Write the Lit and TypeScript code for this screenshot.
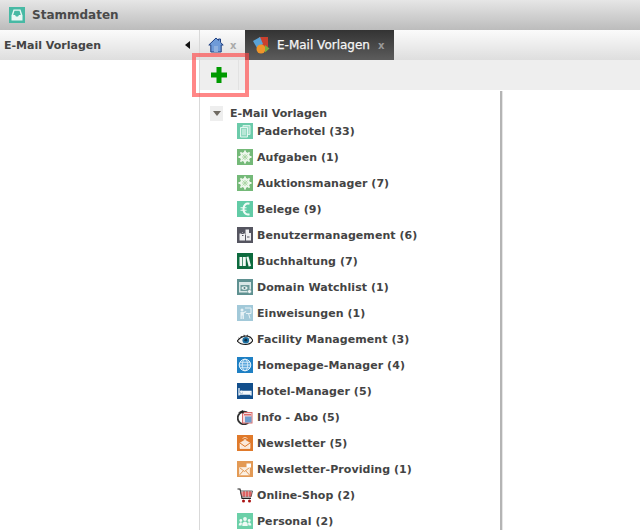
import { LitElement, html, css, svg } from "lit";
import { customElement } from "lit/decorators.js";

const box = (bg: string, inner: unknown) => svg`<rect width="16" height="16" fill="${bg}"/>${inner}`;
const gear = svg`<g stroke="#f1f8ef" stroke-width="1.800"><path d="M8 1.500V14.500M1.500 8H14.500M3.400 3.400L12.600 12.600M12.600 3.400L3.400 12.600"/></g><circle cx="8" cy="8" r="5" fill="#eef7ec"/><path d="M5.500 5.500l5 5M10.500 5.500l-5 5M8 5v6M5 8h6" stroke="#a8d4a2" stroke-width=".9"/>`;
const icons: Record<string, unknown> = {
  paper: box("#6ccbaa", svg`<path d="M6 2.500h7v9H6z" fill="#a5e0cb" stroke="#d7f3e9"/><path d="M3.500 4.500h7v9.500h-7z" fill="#8ed8be" stroke="#e2f7ef"/><path d="M5 7h4M5 9h4M5 11h4" stroke="#e2f7ef"/>`),
  gear: box("#74b978", gear),
  euro: box("#62cba6", svg`<path d="M12.500 2.800C8.500 1.800 6.500 4.500 6.500 8s2 6.200 6 5.200" fill="none" stroke="#f1fbf7" stroke-width="2"/><path d="M3.500 6.800h6M3.500 9.200h6" stroke="#f1fbf7" stroke-width="1.100"/>`),
  users: box("#555560", svg`<path d="M2.500 6.500h5.500v7H2.500zM8.500 2.500h3.500v3.500h2v7.500H9V8H8.500z" fill="#eeeef0"/><path d="M4.500 5h2v1.500h-2zM5 8.500h1.500M10 10h2.500" stroke="#555560" fill="#eeeef0"/>`),
  books: box("#0d6b3e", svg`<path d="M2.500 4h2.800v9H2.500zM6 4h2.800v9H6z" fill="#f2faf6"/><path d="M9.300 4l2.200-.5 2.500 9.500-2.400.5z" fill="#f2faf6"/>`),
  domain: box("#5f9191", svg`<rect x="2" y="3" width="12" height="10.500" fill="#d9e7e7"/><rect x="3.500" y="6" width="9" height="6" fill="#6f9c9c"/><ellipse cx="7.500" cy="9" rx="3" ry="1.800" fill="#e8f1f1"/><circle cx="7.500" cy="9" r="1" fill="#4f7d7d"/><circle cx="12.500" cy="12.500" r="2" fill="#f0f5f5" stroke="#5f9191" stroke-width=".6"/>`),
  teach: box("#a2c9d9", svg`<circle cx="5" cy="5" r="1.500" fill="#e7f2f6"/><path d="M3.500 7h3l2.500-1 .4 1-2.500 1.300v5.700H5.500v-3.500H4.800v3.500H3.500z" fill="#e7f2f6"/><path d="M8 3h6v5.500H9" fill="none" stroke="#e7f2f6"/><path d="M11.500 8.500l1.500 5" stroke="#e7f2f6"/>`),
  eye: svg`<path d="M.3 10C3 6.500 6 5 9 5s5.500 1.500 6.800 4.500C14 12.500 11.500 13.500 8.500 13.500S2.500 12.500.3 10z" fill="#f4f4f4" stroke="#151515" stroke-width="1.100"/><circle cx="8.800" cy="9.200" r="3.300" fill="#1a6ea0"/><circle cx="8.800" cy="9.200" r="1.400" fill="#0c2c44"/><path d="M1.500 7l1.500 1M4 5l1 2M7 3.800l.5 1.700M10.500 3.800l-.5 1.700M14 6l-1.500 1" stroke="#222" stroke-width=".9"/>`,
  globe: box("#1f80c4", svg`<circle cx="8" cy="8" r="5.800" fill="#5ea8dc" stroke="#e3f1fb"/><ellipse cx="8" cy="8" rx="2.700" ry="5.800" fill="none" stroke="#e3f1fb" stroke-width=".8"/><path d="M2.200 8h11.600M3 5.300h10M3 10.700h10" stroke="#e3f1fb" stroke-width=".8"/>`),
  bed: box("#134f8c", svg`<path d="M2 5v7.500M2 11h12v1.500M14 11V8.500H6.500V11" fill="none" stroke="#f2f6fa" stroke-width="1.300"/><rect x="3" y="7.500" width="3" height="2.500" rx="1" fill="#f2f6fa"/><rect x="6.500" y="8" width="7" height="3" fill="#f2f6fa"/>`),
  info: svg`<circle cx="7" cy="9" r="6.300" fill="#fff" stroke="#333" stroke-width="1.800"/><rect x="5.500" y="3.500" width="9.500" height="10.500" fill="#f3d9dc" stroke="#d86a6a"/><rect x="8" y="7.500" width="6.500" height="6" fill="#6f9ccc"/><path d="M1 3.500L6 1 7 4.500z" fill="#222"/><path d="M7 5.800h7" stroke="#d23a3a"/>`,
  mail: box("#e07a2b", svg`<path d="M3 8L8 5.200 13 8v5.500H3z" fill="#fbe8d8" stroke="#fff" stroke-width=".6"/><path d="M3 8l5 3.500L13 8" fill="none" stroke="#e07a2b"/><path d="M5.500 3.500a3.500 3.500 0 015 0M6.700 5a2 2 0 012.600 0" fill="none" stroke="#fbe3cf" stroke-width=".8"/>`),
  mail2: box("#e39a55", svg`<rect x="2.500" y="6.500" width="10" height="7.500" fill="#fbeee0" stroke="#fff" stroke-width=".5"/><path d="M2.500 6.500l5 4 5-4M2.500 14l4-4.500M12.500 14l-4-4.500" fill="none" stroke="#e39a55"/><rect x="9.500" y="2.500" width="4.500" height="4" fill="#fff"/>`),
  cart: svg`<path d="M.5 2h2.500l2 9.500h9" fill="none" stroke="#222" stroke-width="1.100"/><path d="M3.500 4h12l-1.500 6H5z" fill="#fff" stroke="#333" stroke-width=".8"/><path d="M7 4v6M10 4v6M13 4v6M4 6h11M4.500 8h10" stroke="#c22" stroke-width=".9"/><circle cx="6.500" cy="14" r="1.500" fill="#a11"/><circle cx="12.500" cy="14" r="1.500" fill="#a11"/>`,
  people: box("#6bd0a8", svg`<circle cx="8" cy="6" r="1.900" fill="#eefaf5"/><circle cx="3.800" cy="7.500" r="1.400" fill="#eefaf5"/><circle cx="12.200" cy="7.500" r="1.400" fill="#eefaf5"/><path d="M5.300 13v-2.500Q8 6.500 10.700 10.500V13zM1.800 12.500v-1.500Q3.500 8 5 10l-.5 2.500zM14.200 12.500v-1.500Q12.500 8 11 10l.5 2.500z" fill="#eefaf5"/>`),
};

const rows: [string, string][] = [
  ["paper", "Paderhotel (33)"], ["gear", "Aufgaben (1)"], ["gear", "Auktionsmanager (7)"],
  ["euro", "Belege (9)"], ["users", "Benutzermanagement (6)"], ["books", "Buchhaltung (7)"],
  ["domain", "Domain Watchlist (1)"], ["teach", "Einweisungen (1)"], ["eye", "Facility Management (3)"],
  ["globe", "Homepage-Manager (4)"], ["bed", "Hotel-Manager (5)"], ["info", "Info - Abo (5)"],
  ["mail", "Newsletter (5)"], ["mail2", "Newsletter-Providing (1)"], ["cart", "Online-Shop (2)"],
  ["people", "Personal (2)"],
];

@customElement("app-root")
export class AppRoot extends LitElement {
  static styles = css`
    :host { display: block; width: 640px; height: 530px; overflow: hidden; position: relative; background: #fff;
      font-family: "DejaVu Sans", Verdana, sans-serif; font-size: 11px; font-weight: bold; color: #444; }
    .top { height: 30px; display: flex; align-items: center; gap: 7px; padding-left: 9px; box-sizing: border-box;
      background: linear-gradient(#e6e6e6, #bcbcbc); font-size: 12px; color: #4a4a4a; }
    .logo { width: 16px; height: 16px; display: block; }
    .main { display: flex; height: 500px; }
    .left { width: 199px; flex: none; }
    .lhead { height: 30px; display: flex; align-items: center; justify-content: space-between; padding: 0 9px 0 4px;
      background: linear-gradient(#fbfbfb, #dedede); font-size: 11px; color: #444; }
    .tri { width: 0; height: 0; border: 4px solid transparent; border-right: 5px solid #111; border-left: 0; }
    .right { flex: 1; border-left: 1px solid #d9d9d9; min-width: 0; }
    .tabs { height: 30px; display: flex; background: linear-gradient(#fbfbfb, #dedede); }
    .tab { display: flex; align-items: center; box-sizing: border-box; height: 30px; }
    .home { width: 45px; padding-left: 8px; gap: 6px; }
    .active { width: 149px; padding-left: 7px; gap: 7px; background: linear-gradient(#333, #5c5c5c); color: #f6f6f6; font-size: 12px; font-weight: normal; -webkit-text-stroke: .25px #f6f6f6; }
    .x { font-size: 10px; color: #aaa; font-weight: bold; -webkit-text-stroke: 0; }
    .active .x { margin-left: 1px; color: #999; -webkit-text-stroke: 0; }
    .tool { height: 30px; background: #eee; display: flex; }
    .add { width: 36px; padding: 0 1px 1px; display: flex; align-items: center; justify-content: center; border-right: 1px solid #e2e2e2; box-sizing: content-box; height: 29px; }
    .body { display: flex; height: 440px; }
    .tree { width: 300px; flex: none; padding: 16px 0 0 10px; box-sizing: border-box; height: 460px; }
    .split { width: 3px; margin-top: 1px; background: linear-gradient(90deg, #b4b4b4 0 2px, #e6e6e6 2px); height: 460px; }
    .thead { display: flex; align-items: center; height: 15px; gap: 7px; color: #444; }
    .exp { width: 13px; height: 15px; background: #eee; display: flex; align-items: center; justify-content: center; }
    .exp i { border: 4px solid transparent; border-top: 5px solid #6f6a62; border-bottom: 0; }
    .list { list-style: none; margin: -3px 0 0; padding: 0 0 0 27px; letter-spacing: .06px; }
    .list li { height: 26px; display: flex; align-items: center; gap: 4px; white-space: nowrap; color: #444; }
    .list svg { width: 16px; height: 16px; flex: none; display: block; }
    .mark { position: absolute; left: 192px; top: 53px; width: 57px; height: 44px; box-sizing: border-box;
      border: 4px solid rgba(255, 70, 70, .65); pointer-events: none; }
  `;

  render() {
    return html`
      <div class="top">
        <svg class="logo" viewBox="0 0 16 16"><rect width="16" height="16" fill="#47b9a4"/><path d="M4.500 2.500h7l2 6v5h-11v-5z" fill="#e9f7f4"/><path d="M5.500 3.700h5l1.300 4.300H10l-1 1.500H7L6 8H4.200z" fill="#47b9a4"/></svg>
        <span>Stammdaten</span>
      </div>
      <div class="main">
        <div class="left">
          <div class="lhead"><span>E-Mail Vorlagen</span><span class="tri"></span></div>
        </div>
        <div class="right">
          <div class="tabs">
            <div class="tab home">
              <svg width="16" height="16" viewBox="0 0 16 16"><path d="M.8 8L8 1l2.500 2.400V2h2v3.400L15.200 8h-2v7h-10.400V8z" fill="#6f9bd8" stroke="#1f3f80"/><rect x="6" y="9" width="4" height="6" fill="#8fb0de"/></svg>
              <span class="x">x</span>
            </div>
            <div class="tab active">
              <svg width="18" height="18" viewBox="0 0 18 18"><path d="M7 1h9v10H7z" fill="#c9402e"/><path d="M1 5l7-4 3 7-6 4z" fill="#5ba3d6"/><circle cx="9" cy="13" r="4.500" fill="#f0952a"/><path d="M13 9l4.500 3.500-4.500 4z" fill="#7cae3c"/></svg>
              <span>E-Mail Vorlagen</span><span class="x">x</span>
            </div>
          </div>
          <div class="tool">
            <div class="add">
              <svg width="16" height="16" viewBox="0 0 16 16"><path d="M5.500 0h5v5.500H16v5h-5.500V16h-5v-5.500H0v-5h5.500z" fill="#009a00"/></svg>
            </div>
          </div>
          <div class="body">
            <div class="tree">
              <div class="thead"><span class="exp"><i></i></span><span>E-Mail Vorlagen</span></div>
              <ul class="list">
                ${rows.map(([i, t]) => html`<li><svg viewBox="0 0 16 16">${icons[i]}</svg><span>${t}</span></li>`)}
              </ul>
            </div>
            <div class="split"></div>
          </div>
        </div>
      </div>
      <div class="mark"></div>
    `;
  }
}
